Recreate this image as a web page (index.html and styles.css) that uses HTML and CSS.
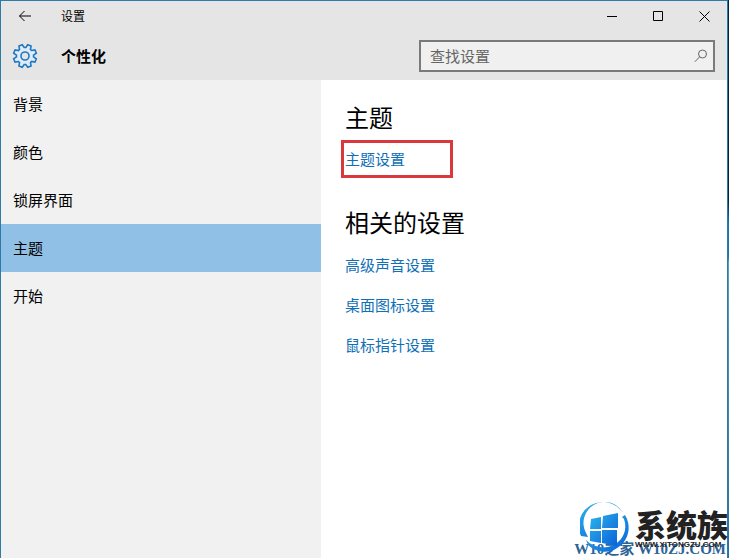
FILE: index.html
```html
<!DOCTYPE html>
<html lang="zh-CN">

<head>
    <meta charset="UTF-8">
    <title>设置</title>
    <link rel="stylesheet" href="styles.css">
</head>

<body>
<div class="window">
    <!-- 顶部 -->
    <header class="top">
        <div class="titlebar">
            <button class="back" aria-label="返回">
                <svg width="14" height="12" viewBox="0 0 14 12"><path d="M13 6H1.5M6.5 1l-5 5 5 5"/></svg>
            </button>
            <span class="title">设置</span>
            <button class="ctrl" aria-label="最小化">
                <svg width="11" height="11" viewBox="0 0 11 11"><path d="M0 5.5h10"/></svg>
            </button>
            <button class="ctrl" aria-label="最大化">
                <svg width="11" height="11" viewBox="0 0 11 11"><path d="M.5 .5h9v9h-9z"/></svg>
            </button>
            <button class="ctrl" aria-label="关闭">
                <svg width="11" height="11" viewBox="0 0 11 11"><path d="M.5 .5l10 10M10.5 .5l-10 10"/></svg>
            </button>
        </div>
        <div class="heading">
            <svg class="gear" width="26" height="26" viewBox="-13 -13 26 26">
                <path transform="rotate(22.5)" d="M-2.5-8.2L-1.8-11.5H1.8L2.5-8.2 4-7.6 6.9-9.4 9.4-6.9 7.6-4 8.2-2.5 11.5-1.8V1.8L8.2 2.5 7.6 4 9.4 6.9 6.9 9.4 4 7.6 2.5 8.2 1.8 11.5H-1.8L-2.5 8.2-4 7.6-6.9 9.4-9.4 6.9-7.6 4-8.2 2.5-11.5 1.8V-1.8L-8.2-2.5-7.6-4-9.4-6.9-6.9-9.4-4-7.6z"/>
                <circle r="4"/>
            </svg>
            <h1>个性化</h1>
            <label class="search">
                <input type="text" placeholder="查找设置" aria-label="查找设置">
                <svg width="14" height="14" viewBox="0 0 14 14"><circle cx="8.5" cy="5" r="4"/><path d="M5.7 7.8L.8 12.8"/></svg>
            </label>
        </div>
    </header>

    <div class="content">
        <!-- 左侧导航 -->
        <nav class="side">
            <a href="#">背景</a>
            <a href="#">颜色</a>
            <a href="#">锁屏界面</a>
            <a href="#" class="current">主题</a>
            <a href="#">开始</a>
        </nav>
        <!-- 右侧内容 -->
        <main class="main">
            <h2>主题</h2>
            <a href="#" class="marked">主题设置</a>
            <h2>相关的设置</h2>
            <ul>
                <li><a href="#">高级声音设置</a></li>
                <li><a href="#">桌面图标设置</a></li>
                <li><a href="#">鼠标指针设置</a></li>
            </ul>
        </main>
    </div>
</div>

<!-- 水印 -->
<div class="site">W10之家 W10ZJ.COM</div>
<div class="brand">
    <svg width="52" height="54" viewBox="0 0 52 54">
        <defs>
            <linearGradient id="blue" x1="0" y1="0" x2="1" y2="1">
                <stop offset="0" stop-color="#2cb4ec"/>
                <stop offset="1" stop-color="#0a62d8"/>
            </linearGradient>
        </defs>
        <path fill="url(#blue)" d="M1 34A24 24 0 0 1 43 11A21 21 0 0 0 6 31L8 35z"/>
        <path fill="url(#blue)" d="M45 13A24 24 0 0 1 8 43L6 38A22 20 0 0 0 41 37A22 22 0 0 0 44 17L42 15z"/>
        <path fill="url(#blue)" d="M11 17l10-2v12H10zM23 14l15-3v15H22zM10 29h11v12l-11-2zM22 28h15v16l-15-3z"/>
    </svg>
    <div class="words">
        <strong>系统族</strong>
        <span>WWW.XITONGZU.COM</span>
    </div>
</div>
</body>

</html>
```
FILE: styles.css
```css
* {
    padding: 0;
    margin: 0;
    box-sizing: border-box;
}

body {
    position: relative;
    min-height: 100vh;
    padding-right: 1px;
    overflow: hidden;
    background: linear-gradient(#06233c 0, #06233c 36%, #1a75ad 40%, #1a75ad 46%, #5d9fb5 47%, #2c6f96 100%);
    font-family: "Noto Sans CJK SC", sans-serif;
    font-size: 15px;
    color: #000;
}

ul {
    list-style: none;
}

a {
    text-decoration: none;
}

button {
    border: 0;
    background: none;
}

svg {
    flex: none;
}

.window {
    display: flex;
    flex-direction: column;
    min-height: 100vh;
    border: 1px solid #2d7ba6;
    border-bottom: 0;
    background-color: #fff;
}

.top {
    background-color: #e5e5e5;
}

.titlebar {
    display: flex;
    align-items: center;
    height: 30px;
}

.back,
.ctrl {
    display: flex;
    align-items: center;
    justify-content: center;
    width: 46px;
    height: 30px;
}

.back {
    width: 48px;
}

.back svg,
.ctrl svg {
    fill: none;
    stroke: #000;
}

.title {
    flex: 1;
    padding-left: 12px;
    line-height: 28px;
    font-size: 12px;
}

.heading {
    display: flex;
    align-items: center;
    height: 49px;
    padding: 0 12px 0 11px;
}

.gear {
    fill: #dcecfa;
    stroke: #2378bd;
    stroke-width: 1.6;
}

.gear circle {
    fill: #e5e5e5;
}

.heading h1 {
    flex: 1;
    padding-left: 23px;
    font-size: 15px;
}

.search {
    display: flex;
    align-items: center;
    width: 296px;
    height: 32px;
    padding: 0 5px 0 9px;
    border: 2px solid #7a7a7a;
    background-color: #f0f0f0;
}

.search input {
    flex: 1;
    min-width: 0;
    border: 0;
    outline: 0;
    background: none;
    font: inherit;
}

.search input::placeholder {
    color: #666;
}

.search svg {
    fill: none;
    stroke: #666;
}

.content {
    flex: 1;
    display: flex;
}

.side {
    width: 320px;
    background-color: #f1f1f1;
}

.side a {
    display: block;
    padding-left: 12px;
    line-height: 48px;
    color: #000;
}

.side .current {
    background-color: #91c0e7;
}

.main {
    flex: 1;
    padding: 19px 24px;
}

.main h2 {
    line-height: 36px;
    font-size: 24px;
    font-weight: normal;
}

.main a {
    color: #0f70b7;
}

.main .marked {
    display: block;
    width: 112px;
    margin: 5px 0 26px -4px;
    padding-left: 1px;
    border: 3px solid #d9383c;
    line-height: 32px;
}

.main li {
    line-height: 40px;
}

.main ul {
    margin-top: 5px;
}

.site {
    position: absolute;
    right: 3px;
    bottom: 0;
    line-height: 18px;
    font-family: "Liberation Serif", "Noto Sans CJK SC", serif;
    font-size: 15px;
    font-weight: bold;
    color: #2c6496;
    white-space: nowrap;
}

.brand {
    position: absolute;
    right: 1px;
    bottom: 2px;
    display: flex;
    gap: 3px;
    color: #222;
    white-space: nowrap;
}

.words strong,
.words span {
    display: block;
}

.words strong {
    line-height: 32px;
    padding-top: 6px;
    font-size: 31px;
    font-weight: 900;
}

.words span {
    line-height: 10px;
    font-family: "Liberation Sans", sans-serif;
    font-size: 8px;
    font-weight: bold;
}
```
